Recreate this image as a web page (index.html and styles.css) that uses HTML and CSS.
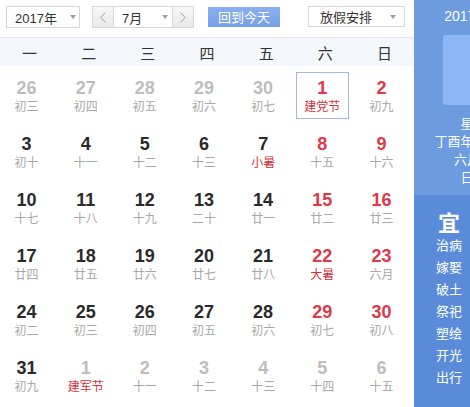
FILE: index.html
```html
<!DOCTYPE html>
<html lang="zh-CN">
<head>
<meta charset="utf-8">
<title>万年历</title>
<link rel="stylesheet" href="styles.css">
</head>
<body>
<div class="app">
  <div class="main">
    <div class="toolbar">
      <div class="select year"><span>2017年</span><i class="caret"></i></div>
      <div class="month-group">
        <button class="nav"><svg width="6" height="11" viewBox="0 0 6 11"><polyline points="5.5,0.5 0.8,5.5 5.5,10.5" fill="none" stroke="#9a9a9a" stroke-width="1"/></svg></button>
        <div class="select month"><span>7月</span><i class="caret"></i></div>
        <button class="nav"><svg width="6" height="11" viewBox="0 0 6 11"><polyline points="0.5,0.5 5.2,5.5 0.5,10.5" fill="none" stroke="#9a9a9a" stroke-width="1"/></svg></button>
      </div>
      <button class="today">回到今天</button>
      <div class="select holiday"><span>放假安排</span><i class="caret"></i></div>
    </div>
    <div class="weekdays">
      <div>一</div><div>二</div><div>三</div><div>四</div><div>五</div><div>六</div><div>日</div>
    </div>
    <div class="grid">
      <div class="cell other"><div class="box"><b>26</b><span>初三</span></div></div>
      <div class="cell other"><div class="box"><b>27</b><span>初四</span></div></div>
      <div class="cell other"><div class="box"><b>28</b><span>初五</span></div></div>
      <div class="cell other"><div class="box"><b>29</b><span>初六</span></div></div>
      <div class="cell other"><div class="box"><b>30</b><span>初七</span></div></div>
      <div class="cell weekend selected"><div class="box"><b>1</b><span class="fest">建党节</span></div></div>
      <div class="cell weekend"><div class="box"><b>2</b><span>初九</span></div></div>

      <div class="cell"><div class="box"><b>3</b><span>初十</span></div></div>
      <div class="cell"><div class="box"><b>4</b><span>十一</span></div></div>
      <div class="cell"><div class="box"><b>5</b><span>十二</span></div></div>
      <div class="cell"><div class="box"><b>6</b><span>十三</span></div></div>
      <div class="cell"><div class="box"><b>7</b><span class="fest">小暑</span></div></div>
      <div class="cell weekend"><div class="box"><b>8</b><span>十五</span></div></div>
      <div class="cell weekend"><div class="box"><b>9</b><span>十六</span></div></div>

      <div class="cell"><div class="box"><b>10</b><span>十七</span></div></div>
      <div class="cell"><div class="box"><b>11</b><span>十八</span></div></div>
      <div class="cell"><div class="box"><b>12</b><span>十九</span></div></div>
      <div class="cell"><div class="box"><b>13</b><span>二十</span></div></div>
      <div class="cell"><div class="box"><b>14</b><span>廿一</span></div></div>
      <div class="cell weekend"><div class="box"><b>15</b><span>廿二</span></div></div>
      <div class="cell weekend"><div class="box"><b>16</b><span>廿三</span></div></div>

      <div class="cell"><div class="box"><b>17</b><span>廿四</span></div></div>
      <div class="cell"><div class="box"><b>18</b><span>廿五</span></div></div>
      <div class="cell"><div class="box"><b>19</b><span>廿六</span></div></div>
      <div class="cell"><div class="box"><b>20</b><span>廿七</span></div></div>
      <div class="cell"><div class="box"><b>21</b><span>廿八</span></div></div>
      <div class="cell weekend"><div class="box"><b>22</b><span class="fest">大暑</span></div></div>
      <div class="cell weekend"><div class="box"><b>23</b><span>六月</span></div></div>

      <div class="cell"><div class="box"><b>24</b><span>初二</span></div></div>
      <div class="cell"><div class="box"><b>25</b><span>初三</span></div></div>
      <div class="cell"><div class="box"><b>26</b><span>初四</span></div></div>
      <div class="cell"><div class="box"><b>27</b><span>初五</span></div></div>
      <div class="cell"><div class="box"><b>28</b><span>初六</span></div></div>
      <div class="cell weekend"><div class="box"><b>29</b><span>初七</span></div></div>
      <div class="cell weekend"><div class="box"><b>30</b><span>初八</span></div></div>

      <div class="cell"><div class="box"><b>31</b><span>初九</span></div></div>
      <div class="cell other"><div class="box"><b>1</b><span class="fest">建军节</span></div></div>
      <div class="cell other"><div class="box"><b>2</b><span>十一</span></div></div>
      <div class="cell other"><div class="box"><b>3</b><span>十二</span></div></div>
      <div class="cell other"><div class="box"><b>4</b><span>十三</span></div></div>
      <div class="cell other"><div class="box"><b>5</b><span>十四</span></div></div>
      <div class="cell other"><div class="box"><b>6</b><span>十五</span></div></div>
    </div>
  </div>
  <aside class="side">
    <div class="side-top">
      <div class="side-date">2017-07-01</div>
      <div class="side-box"></div>
      <div class="side-info">
        <div>星期六</div>
        <div>丁酉年【鸡年】</div>
        <div>六月初八</div>
        <div>日冲猪</div>
      </div>
    </div>
    <div class="side-bottom">
      <div class="yiji">
        <div class="yiji-title">宜</div>
        <div>治病</div><div>嫁娶</div><div>破土</div><div>祭祀</div><div>塑绘</div><div>开光</div><div>出行</div>
      </div>
      <div class="yiji">
        <div class="yiji-title">忌</div>
        <div>动土</div><div>安葬</div>
      </div>
    </div>
  </aside>
</div>
</body>
</html>
```
FILE: styles.css
```css
html, body {
  margin: 0;
  padding: 0;
  width: 470px;
  height: 407px;
  overflow: hidden;
  background: #fff;
}
body {
  font-family: "Liberation Sans", "Noto Sans CJK SC", sans-serif;
  color: #333;
}
.app {
  display: flex;
  width: 546px;
  height: 407px;
}
.main {
  width: 414px;
  flex-shrink: 0;
}
.toolbar {
  height: 37px;
  border-bottom: 1px solid #e1e6ee;
  display: flex;
  align-items: flex-start;
  padding-left: 6px;
  box-sizing: border-box;
  height: 38px;
  padding-top: 6px;
}
.select {
  box-sizing: border-box;
  height: 22px;
  border: 1px solid #d6d6d6;
  background: #fff;
  display: flex;
  align-items: center;
  justify-content: space-between;
  font-size: 13px;
  color: #333;
}
.caret {
  width: 0;
  height: 0;
  border-left: 3.5px solid transparent;
  border-right: 3.5px solid transparent;
  border-top: 4px solid #a0a0a0;
}
.year {
  width: 74px;
  padding: 0 3px 0 8px;
}
.month-group {
  display: flex;
  margin-left: 12px;
}
.nav {
  box-sizing: border-box;
  width: 22px;
  height: 22px;
  border: 1px solid #d6d6d6;
  background: linear-gradient(#f8f8f8, #e9e9e9);
  padding: 0;
  margin: 0;
  display: flex;
  align-items: center;
  justify-content: center;
}
.nav + .select { border-left: none; border-right: none; }
.month {
  width: 58px;
  padding: 0 4px 0 8px;
}
.today {
  margin: 1px 0 0 14px;
  width: 72px;
  height: 20px;
  border: none;
  padding: 0;
  background: linear-gradient(#88b0ef, #779fe6);
  color: #fff;
  font-family: "Noto Sans CJK SC", sans-serif;
  font-size: 13px;
  line-height: 20px;
}
.holiday {
  margin-left: 28px;
  width: 97px;
  height: 21px;
  padding: 0 8px 0 11px;
}
.weekdays {
  height: 28px;
  background: #f4f7fc;
  display: grid;
  grid-template-columns: repeat(7, 1fr);
  align-items: center;
  text-align: center;
  font-family: "Noto Sans CJK SC", sans-serif;
  font-size: 15px;
  color: #333;
}
.grid {
  display: grid;
  grid-template-columns: repeat(7, 1fr);
  grid-auto-rows: 56px;
}
.cell {
  padding: 6px 6px 3px 0;
}
.box {
  box-sizing: border-box;
  height: 47px;
  border: 1px solid transparent;
  padding-top: 4.5px;
  display: flex;
  flex-direction: column;
  align-items: center;
}
.box b {
  font-size: 18px;
  line-height: 20px;
  font-weight: bold;
  color: #2a2a2a;
}
.box span {
  font-family: "Noto Sans CJK SC", sans-serif;
  font-size: 12px;
  line-height: 16px;
  color: #a8a8a8;
}
.weekend .box b { color: #e0384b; }
.other .box b { color: #bdbdbd; }
.box span.fest { color: #d5303d; }
.selected .box {
  border-color: #a2b9dc;
}
.side {
  width: 132px;
  flex-shrink: 0;
  display: flex;
  flex-direction: column;
  color: #fff;
  font-family: "Noto Sans CJK SC", sans-serif;
}
.side-top {
  background: #6c9be0;
  padding: 6px 0 9px;
  display: flex;
  flex-direction: column;
  align-items: center;
}
.side-date {
  font-family: "Liberation Sans", sans-serif;
  font-size: 14px;
  line-height: 20px;
}
.side-box {
  margin-top: 9px;
  width: 74px;
  height: 70px;
  border-radius: 3px;
  background: #8cb6f6;
}
.side-info {
  margin-top: 9px;
  font-size: 13px;
  line-height: 18px;
  text-align: center;
}
.side-bottom {
  flex: 1;
  background: #5a8bd8;
  display: grid;
  grid-template-columns: 70px 62px;
  align-items: start;
  padding-top: 13px;
}
.yiji {
  text-align: center;
  font-size: 13px;
  line-height: 22px;
}
.yiji-title {
  font-size: 22px;
  font-weight: bold;
  line-height: 26px;
}
```
